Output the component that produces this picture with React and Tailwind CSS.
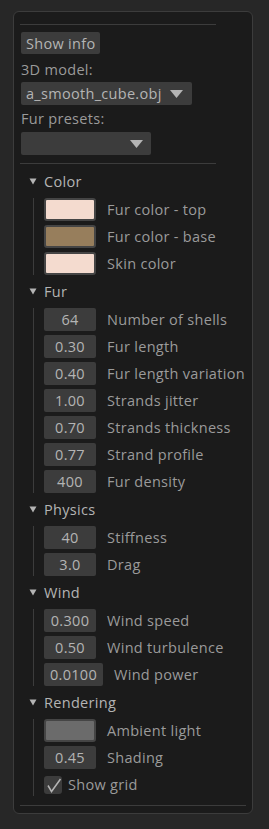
import React from "react";

const FONT = { fontFamily: '"Open Sans", "Noto Sans", sans-serif' };

function Tri() {
  return (
    <svg width="8" height="7" viewBox="0 0 8 7" className="block">
      <polygon points="0.5,0.5 7.5,0.5 4,6.5" fill="#b4b4b4" />
    </svg>
  );
}

function ComboTri() {
  return (
    <svg width="13" height="8" viewBox="0 0 13 8" className="block">
      <polygon points="0,0 13,0 6.5,8" fill="#b4b4b4" />
    </svg>
  );
}

function Header({ title }) {
  return (
    <div className="h-[25px] flex items-center text-[#b4b4b4]">
      <div className="w-[23px] pl-[8px] flex items-center">
        <Tri />
      </div>
      <span className="pt-[2px]">{title}</span>
    </div>
  );
}

function Section({ title, children, first }) {
  return (
    <div className={first ? "mt-[5px]" : "mt-[4px]"}>
      <Header title={title} />
      <div className="mt-[4px] flex">
        <div className="w-[12px] shrink-0" />
        <div className="w-px bg-[#3c3c3c] shrink-0" />
        <div className="ml-[10px] flex flex-col gap-[4px]">{children}</div>
      </div>
    </div>
  );
}

function Swatch({ color, label }) {
  return (
    <div className="h-[23px] flex items-center">
      <div
        className="w-[52px] h-[23px] rounded-[3px] border-2 border-[#454545]"
        style={{ backgroundColor: color }}
      />
      <span className="ml-[11px] pt-[2px] text-[#9a9a9a]">{label}</span>
    </div>
  );
}

function Drag({ value, label, wide }) {
  return (
    <div className="h-[23px] flex items-center">
      <div
        className={
          (wide ? "w-[59px]" : "w-[52px]") +
          " h-[23px] pt-[2px] rounded-[2px] bg-[#3c3c3c] flex items-center justify-center text-[#b4b4b4]"
        }
      >
        {value}
      </div>
      <span className="ml-[11px] pt-[2px] text-[#9a9a9a]">{label}</span>
    </div>
  );
}

export default function App() {
  return (
    <div
      className="w-[269px] h-[829px] bg-[#272727] pt-[11px] pl-[13px] text-[14.5px] tracking-[0.3px] leading-none whitespace-nowrap"
      style={FONT}
    >
      <div className="w-[240px] h-[803px] border border-[#3c3c3c] rounded-[6px] bg-[#1b1b1b] pt-[12px] pl-[7px] flex flex-col">
        <div className="h-px w-[196px] -ml-px bg-[#3c3c3c]" />
        <div className="mt-[7px] h-[22px] pt-[2px] self-start px-[5px] rounded-[2px] bg-[#3c3c3c] text-[#b4b4b4] flex items-center">
          Show info
        </div>
        <div className="h-[28px] pt-[4px] flex items-center text-[#9a9a9a]">3D model:</div>
        <div className="h-[23px] w-[171px] rounded-[2px] bg-[#3c3c3c] flex items-center pl-[5px] text-[#b4b4b4]">
          <span className="pt-[2px]">a_smooth_cube.obj</span>
          <span className="ml-[8px]">
            <ComboTri />
          </span>
        </div>
        <div className="h-[27px] pt-[2px] flex items-center text-[#9a9a9a]">Fur presets:</div>
        <div className="h-[23px] w-[130px] rounded-[2px] bg-[#3c3c3c] flex items-center justify-end pr-[8px]">
          <ComboTri />
        </div>
        <div className="mt-[8px] h-px w-[196px] -ml-px bg-[#3c3c3c]" />

        <Section title="Color" first>
          <Swatch color="#f4dbcf" label="Fur color - top" />
          <Swatch color="#977e5c" label="Fur color - base" />
          <Swatch color="#f4dbcf" label="Skin color" />
        </Section>

        <Section title="Fur">
          <Drag value="64" label="Number of shells" />
          <Drag value="0.30" label="Fur length" />
          <Drag value="0.40" label="Fur length variation" />
          <Drag value="1.00" label="Strands jitter" />
          <Drag value="0.70" label="Strands thickness" />
          <Drag value="0.77" label="Strand profile" />
          <Drag value="400" label="Fur density" />
        </Section>

        <Section title="Physics">
          <Drag value="40" label="Stiffness" />
          <Drag value="3.0" label="Drag" />
        </Section>

        <Section title="Wind">
          <Drag value="0.300" label="Wind speed" />
          <Drag value="0.50" label="Wind turbulence" />
          <Drag value="0.0100" label="Wind power" wide />
        </Section>

        <Section title="Rendering">
          <Swatch color="#6b6b6b" label="Ambient light" />
          <Drag value="0.45" label="Shading" />
          <div className="h-[23px] flex items-center">
            <div className="w-[18px] h-[18px] rounded-[3px] bg-[#3c3c3c]">
              <svg width="18" height="18" viewBox="0 0 18 18" className="block">
                <polyline
                  points="4,9.5 7.5,15.5 16.5,3"
                  fill="none"
                  stroke="#b4b4b4"
                  strokeWidth="1.5"
                />
              </svg>
            </div>
            <span className="ml-[6px] pt-[2px] text-[#9a9a9a]">Show grid</span>
          </div>
        </Section>

        <div className="mt-[9px] h-px w-[226px] -ml-px bg-[#3c3c3c]" />
      </div>
    </div>
  );
}
